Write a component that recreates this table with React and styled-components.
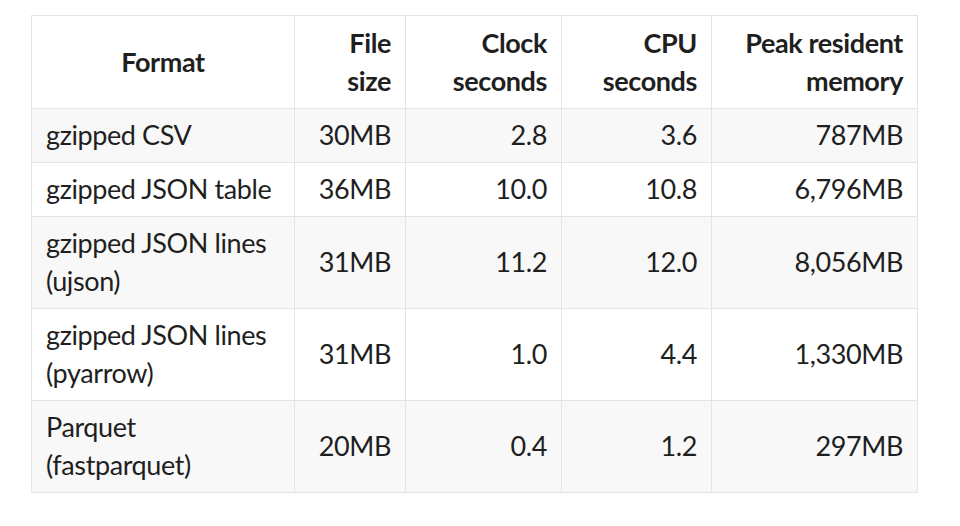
import React from "react";
import styled, { createGlobalStyle } from "styled-components";

const Global = createGlobalStyle`
  html, body { margin: 0; padding: 0; background: #ffffff; }
  body { font-family: Lato, "Noto Sans", sans-serif; color: #1f1f1f; }
`;

const Page = styled.div`
  padding: 15px 0 0 31px;
`;

const Table = styled.table`
  border-collapse: collapse;
  table-layout: fixed;
  width: 886px;
  font-size: 27px;
  line-height: 38px;
  letter-spacing: -0.4px;
  border: 1px solid #e4e4e4;
`;

const Col = styled.col`
  width: ${(p) => p.$w}px;
`;

const Th = styled.th`
  font-weight: 700;
  text-align: ${(p) => p.$align || "right"};
  vertical-align: middle;
  padding: 8px 14px;
  border: 1px solid #e4e4e4;
  background: #ffffff;
`;

const Row = styled.tr`
  background: ${(p) => (p.$shade ? "#f8f8f8" : "#ffffff")};
`;

const Td = styled.td`
  text-align: ${(p) => p.$align || "right"};
  vertical-align: middle;
  padding: 7px 14px 8px;
  border: 1px solid #e4e4e4;
`;

const rows = [
  ["gzipped CSV", "30MB", "2.8", "3.6", "787MB"],
  ["gzipped JSON table", "36MB", "10.0", "10.8", "6,796MB"],
  [["gzipped JSON lines", "(ujson)"], "31MB", "11.2", "12.0", "8,056MB"],
  [["gzipped JSON lines", "(pyarrow)"], "31MB", "1.0", "4.4", "1,330MB"],
  [["Parquet", "(fastparquet)"], "20MB", "0.4", "1.2", "297MB"],
];

function Label({ value }) {
  if (Array.isArray(value)) {
    return (
      <>
        {value[0]}
        <br />
        {value[1]}
      </>
    );
  }
  return value;
}

export default function App() {
  return (
    <Page>
      <Global />
      <Table>
        <colgroup>
          <Col $w={263} />
          <Col $w={111} />
          <Col $w={156} />
          <Col $w={150} />
          <Col $w={206} />
        </colgroup>
        <thead>
          <tr>
            <Th $align="center">Format</Th>
            <Th>File<br />size</Th>
            <Th>Clock<br />seconds</Th>
            <Th>CPU<br />seconds</Th>
            <Th>Peak resident<br />memory</Th>
          </tr>
        </thead>
        <tbody>
          {rows.map((r, i) => (
            <Row key={i} $shade={i % 2 === 0}>
              <Td $align="left"><Label value={r[0]} /></Td>
              <Td>{r[1]}</Td>
              <Td>{r[2]}</Td>
              <Td>{r[3]}</Td>
              <Td>{r[4]}</Td>
            </Row>
          ))}
        </tbody>
      </Table>
    </Page>
  );
}
